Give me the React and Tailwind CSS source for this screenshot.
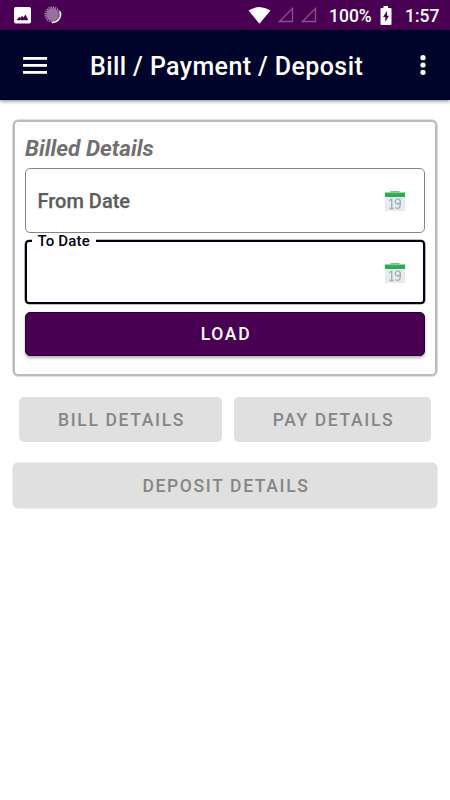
import React from "react";

function StatusBar() {
  return (
    <div className="flex h-[30px] items-center bg-[#4a0052] pr-[10px] pl-[14px] text-white">
      <svg width="17" height="17" viewBox="0 0 17 17">
        <rect width="17" height="16.5" rx="1.8" fill="#fff" />
        <path d="M2.6 13.2 5.2 9.8 6.4 11 8 8.8 9.5 10.6 11.500 7.600 14.400 13.200Z" fill="#4a0052" />
      </svg>
      <svg width="18" height="18" viewBox="0 0 18 18" className="ml-[13px]">
        <circle cx="8.5" cy="8.5" r="6.4" fill="#9a6fa0" />
        <circle cx="8.5" cy="8.5" r="7.3" fill="none" stroke="#b294b6" strokeWidth="1.600" strokeDasharray="1.300 1" />
        <path d="M16 5.500A8 8 0 0 1 8 16.400" fill="none" stroke="#fff" strokeWidth="1.500" />
      </svg>
      <svg width="23" height="17" viewBox="0 0 23 17" className="ml-auto">
        <path d="M.5 3.600Q11.500-3.400 22.500 3.600L11.500 16.800Z" fill="#fff" />
      </svg>
      <svg width="16" height="16" viewBox="0 0 16 16" className="ml-[7px]">
        <path d="M14.500 1.500V14.500H1.500Z" fill="none" stroke="#85538a" strokeWidth="1.300" />
      </svg>
      <svg width="16" height="16" viewBox="0 0 16 16" className="ml-[7px]">
        <path d="M14.500 1.500V14.500H1.500Z" fill="none" stroke="#85538a" strokeWidth="1.300" />
      </svg>
      <span className="mt-[2px] ml-[12px] w-[43px] text-[17.5px] leading-5 font-medium whitespace-nowrap">100%</span>
      <svg width="12" height="19" viewBox="0 0 12 19" className="ml-[8px]">
        <path d="M3.500 0H8V2H10.500Q11.500 2 11.500 3V18Q11.500 19 10.500 19H1.500Q.5 19 .5 18V3Q.5 2 1.500 2H3.500Z" fill="#fff" />
        <path d="M7 5 3 11H5.300V16L9 9.700H7Z" fill="#4a0052" />
      </svg>
      <span className="mt-[2px] ml-[13px] w-[35px] text-[17.5px] leading-5 font-medium whitespace-nowrap">1:57</span>
    </div>
  );
}

function AppBar() {
  return (
    <header className="flex h-[70px] items-center bg-[#00042b] pr-[24.5px] pl-[23px] text-white shadow-[0_1px_4px_rgba(0,0,0,0.5)]">
      <svg width="24" height="17" viewBox="0 0 24 17" fill="#fff">
        <rect width="24" height="2.800" />
        <rect y="7" width="24" height="2.800" />
        <rect y="14" width="24" height="2.800" />
      </svg>
      <h1 className="mt-[4px] ml-[43px] text-[25px] leading-8 font-medium tracking-[0.4px] whitespace-nowrap">Bill / Payment / Deposit</h1>
      <svg width="6" height="20" viewBox="0 0 6 20" fill="#fff" className="ml-auto">
        <circle cx="3" cy="2.700" r="2.600" />
        <circle cx="3" cy="10" r="2.600" />
        <circle cx="3" cy="17.300" r="2.600" />
      </svg>
    </header>
  );
}

function CalendarIcon() {
  return (
    <svg width="20" height="21" viewBox="0 0 20 21">
      <rect y="6" width="20" height="15" fill="#e6ebee" />
      <rect y="2.500" width="20" height="4.500" fill="#27ad50" />
      <path d="M5.500 1.500H14.500M6 3H14" stroke="#7fb592" strokeWidth="1.200" />
      <path
        d="M4.300 10.500 6.700 9.200V18.500M4.500 18.500H8.500M15.300 11.500A2.500 2.500 0 1 1 15.300 11.400C15.500 15.500 15 18.500 12.700 18.500Q11.200 18.500 10.500 17.200"
        fill="none"
        stroke="#a3acb9"
        strokeWidth="1.300"
      />
    </svg>
  );
}

function DisabledButton({ className, children }) {
  return (
    <button disabled className={"flex h-[45px] items-center justify-center rounded-[5px] bg-[#e0e0e0] pt-[2px] pl-[2px] text-[17.5px] font-medium tracking-[1.65px] text-[#868686] " + className}>
      {children}
    </button>
  );
}

export default function App() {
  return (
    <div className="min-h-screen w-full bg-white font-['Roboto',sans-serif]">
      <StatusBar />
      <AppBar />
      <main className="flex flex-col px-[13px] pt-[20px]">
        <section className="flex h-[256px] flex-col rounded-[5px] border-2 border-[#bbbbbb] px-[10px] ring-[0.5px] ring-[#bbbbbb]">
          <h2 className="mt-[12px] h-[34px] text-[22.5px] leading-[28px] font-bold text-[#707070] italic">Billed Details</h2>
          <div className="flex h-[65px] shrink-0 items-center justify-between rounded-[5px] border border-[#858585] pr-[19px] pl-[11.5px]">
            <span className="text-[20px] font-medium text-[#5c5c5c] [-webkit-text-stroke:0.25px_#5c5c5c]">From Date</span>
            <CalendarIcon />
          </div>
          <div className="relative mt-[7px] flex h-[64px] shrink-0 items-center justify-end rounded-[4px] border-2 border-[#00000f] pr-[18px] ring-[0.3px] ring-[#00000f]">
            <span className="absolute -top-[9px] left-[5px] bg-white pr-[6px] pl-[5.5px] text-[15px] leading-4 font-medium tracking-[0.15px] whitespace-nowrap text-[#00000f]">To Date</span>
            <CalendarIcon />
          </div>
          <button className="mt-[8px] flex h-[44px] shrink-0 items-center justify-center rounded-[5px] border border-[#260032] bg-[#4a0052] pt-[1px] pl-[2px] text-[17.5px] font-medium tracking-[1.65px] text-white shadow-[0_2px_3px_rgba(0,0,0,0.3)]">
            LOAD
          </button>
        </section>
        <div className="mt-[21px] flex gap-[12px] pl-[6px]">
          <DisabledButton className="w-[203px]">BILL DETAILS</DisabledButton>
          <DisabledButton className="w-[197px]">PAY DETAILS</DisabledButton>
        </div>
        <DisabledButton className="mt-[21px] w-full ring-[0.5px] ring-[#e0e0e0]">DEPOSIT DETAILS</DisabledButton>
      </main>
    </div>
  );
}
